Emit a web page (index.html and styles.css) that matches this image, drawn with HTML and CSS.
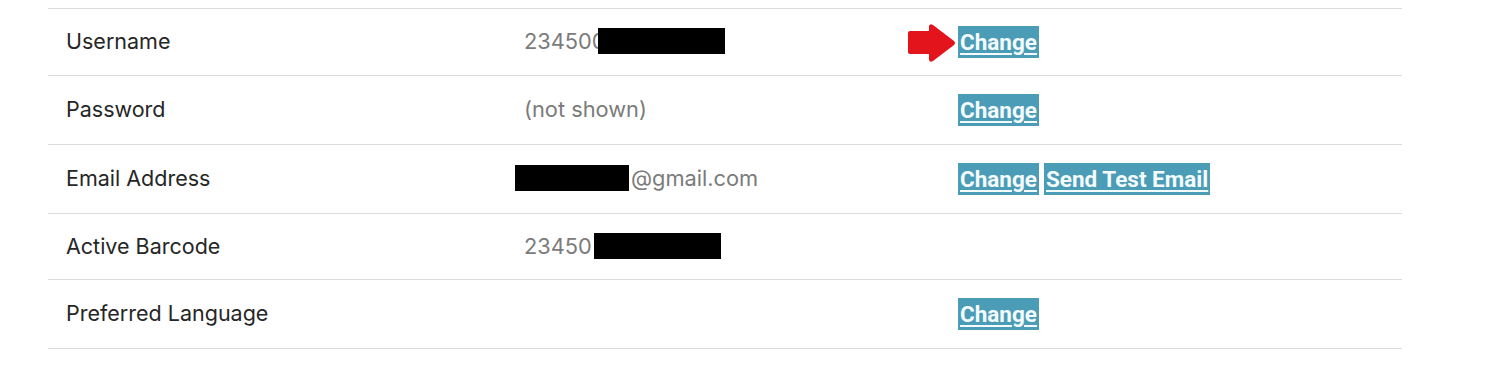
FILE: index.html
```html
<!DOCTYPE html>
<html>
<head>
<meta charset="utf-8">
<link rel="stylesheet" href="styles.css">
</head>
<body>
<div class="table">
  <div class="row r1">
    <div class="label">Username</div>
    <div class="value">234500<span class="redact w127 over"></span></div>
    <div class="actions">
      <svg class="arrow" width="48" height="38" viewBox="0 0 48 38"><path d="M2 7 H21 V2 Q22 -1 25 1 L46 17 Q48 19 46 21 L25 37 Q22 39 21 36 V30 H2 Q0 30 0 28 V9 Q0 7 2 7 Z" fill="#e3141b"/></svg>
      <a class="btn" href="#">Change</a>
    </div>
  </div>
  <div class="row r2">
    <div class="label">Password</div>
    <div class="value">(not shown)</div>
    <div class="actions"><a class="btn" href="#">Change</a></div>
  </div>
  <div class="row r3">
    <div class="label">Email Address</div>
    <div class="value email"><span class="redact w114"></span>@gmail.com</div>
    <div class="actions"><a class="btn" href="#">Change</a><a class="btn" href="#">Send Test Email</a></div>
  </div>
  <div class="row r4">
    <div class="label">Active Barcode</div>
    <div class="value">23450<span class="redact w127 gap"></span></div>
    <div class="actions"></div>
  </div>
  <div class="row r5">
    <div class="label">Preferred Language</div>
    <div class="value"></div>
    <div class="actions"><a class="btn" href="#">Change</a></div>
  </div>
</div>
</body>
</html>
```
FILE: styles.css
```css
html, body {
  margin: 0;
  padding: 0;
  background: #fff;
}
body {
  font-family: Inter, "Noto Sans", sans-serif;
}
.table {
  margin: 8px 0 0 48px;
  width: 1354px;
  border-bottom: 1px solid #dcdcdc;
}
.row {
  display: grid;
  grid-template-columns: 476px 434px 1fr;
  align-items: center;
  border-top: 1px solid #dcdcdc;
  height: 68px;
}
.r1 { height: 66px; }
.r4 { height: 65px; }
.label {
  padding-left: 18px;
  font-size: 21.5px;
  color: #262626;
  margin-top: -2px;
}
.value {
  font-size: 21.8px;
  color: #7b7b7b;
  display: flex;
  align-items: center;
  margin-top: -2px;
}
.email { margin-left: -9px; }
.redact {
  display: inline-block;
  background: #000;
  height: 26px;
}
.w127 { width: 127px; }
.w114 { width: 114px; margin-right: 2px; }
.over { margin-left: -8px; }
.gap { margin-left: 2px; }
.actions {
  display: flex;
  align-items: center;
  gap: 5px;
  position: relative;
}
.arrow {
  position: absolute;
  left: -50px;
  top: -2px;
}
.btn {
  display: inline-block;
  background: #4b9cb6;
  color: #f4fbfd;
  font-family: Roboto, "Liberation Sans", sans-serif;
  font-weight: 700;
  font-size: 22.5px;
  line-height: 32px;
  height: 32px;
  padding: 0 2px;
  text-decoration: underline;
  text-decoration-thickness: 2px;
  text-underline-offset: 3px;
}
```
